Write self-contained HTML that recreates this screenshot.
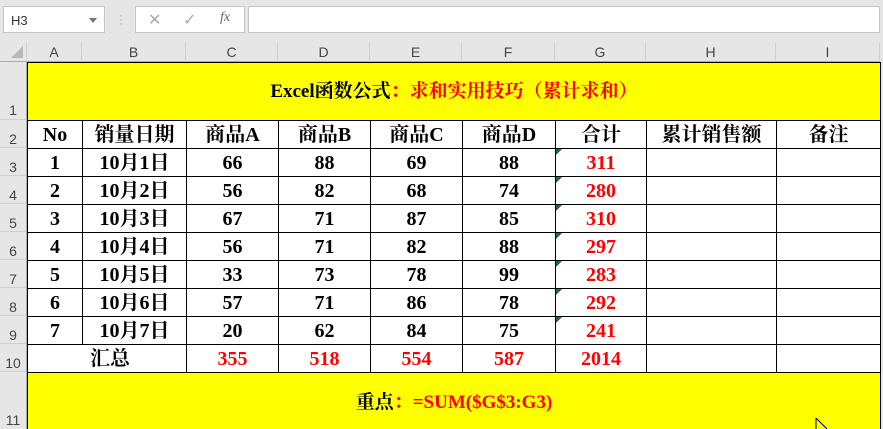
<!DOCTYPE html>
<html><head><meta charset="utf-8"><style>
*{margin:0;padding:0;box-sizing:border-box}
html,body{width:883px;height:429px;overflow:hidden}
body{background:#e6e6e6;font-family:"Liberation Serif","Noto Serif CJK SC",serif;position:relative}
.tb{position:absolute;left:0;top:0;width:883px;height:43px;background:#e6e6e6}
.box{position:absolute;background:#fff;border:1px solid #c6c6c6}
.hdr{position:absolute;top:43px;height:19px;background:#e6e6e6;border-bottom:1px solid #ababab;font:14px "Liberation Sans",sans-serif;color:#444;text-align:center;line-height:19px;border-right:1px solid #d0d0d0}
.rh{position:absolute;left:0;width:27px;background:#e6e6e6;border-right:1px solid #ababab;font:14px "Liberation Sans",sans-serif;color:#444;text-align:center;border-bottom:1px solid #d0d0d0}
table{position:absolute;left:27px;top:62px;border-collapse:collapse;table-layout:fixed;background:#fff}
td{border:1.5px solid #000;text-align:center;font-weight:bold;font-size:20px;height:28px;padding:0;line-height:26px;white-space:nowrap;overflow:hidden}
.r{color:#f00}
.y{background:#ff0}
.tri{position:relative}
.tri:before{content:"";position:absolute;left:0;top:0;border-top:6px solid #1e6b2e;border-right:6px solid transparent}
</style></head><body>
<div class="tb">
<div class="box" style="left:3px;top:6px;width:102px;height:27px;font:13px 'Liberation Sans',sans-serif;color:#333;padding:6px 7px">H3<span style="position:absolute;right:7px;top:11px;border-top:5px solid #777;border-left:4px solid transparent;border-right:4px solid transparent"></span></div>
<div style="position:absolute;left:119px;top:13px;color:#aaa;font:12px sans-serif;line-height:4px">·<br>·<br>·</div>
<div class="box" style="left:135px;top:6px;width:110px;height:27px;color:#aaa;font:16px 'Liberation Sans',sans-serif">
<span style="position:absolute;left:12px;top:3px">✕</span><span style="position:absolute;left:47px;top:3px">✓</span><span style="position:absolute;left:84px;top:3px;font:italic 14px 'Liberation Serif',serif;color:#666">fx</span></div>
<div class="box" style="left:248px;top:6px;width:632px;height:27px"></div>
</div>
<div class="hdr" style="left:0;width:27px"><span style="position:absolute;right:3px;bottom:3px;border-bottom:12px solid #b8b8b8;border-left:12px solid transparent"></span></div>
<div class="hdr" style="left:27px;width:55px">A</div>
<div class="hdr" style="left:82px;width:104px">B</div>
<div class="hdr" style="left:186px;width:92px">C</div>
<div class="hdr" style="left:278px;width:92px">D</div>
<div class="hdr" style="left:370px;width:92px">E</div>
<div class="hdr" style="left:462px;width:93px">F</div>
<div class="hdr" style="left:555px;width:91px">G</div>
<div class="hdr" style="left:646px;width:130px">H</div>
<div class="hdr" style="left:776px;width:104px">I</div>
<div class="rh" style="top:62px;height:58px;line-height:96px">1</div>
<div class="rh" style="top:120px;height:28px;line-height:38px">2</div>
<div class="rh" style="top:148px;height:28px;line-height:38px">3</div>
<div class="rh" style="top:176px;height:28px;line-height:38px">4</div>
<div class="rh" style="top:204px;height:28px;line-height:38px">5</div>
<div class="rh" style="top:232px;height:28px;line-height:38px">6</div>
<div class="rh" style="top:260px;height:28px;line-height:38px">7</div>
<div class="rh" style="top:288px;height:28px;line-height:38px">8</div>
<div class="rh" style="top:316px;height:28px;line-height:38px">9</div>
<div class="rh" style="top:344px;height:28px;line-height:38px">10</div>
<div class="rh" style="top:372px;height:70px;line-height:96px">11</div>
<table>
<colgroup><col style="width:55px"><col style="width:104px"><col style="width:92px"><col style="width:92px"><col style="width:92px"><col style="width:93px"><col style="width:91px"><col style="width:130px"><col style="width:104px"></colgroup>
<tr><td colspan="9" class="y" style="height:58px;font-size:19px">Excel函数公式<span class="r">：求和实用技巧（累计求和）</span></td></tr>
<tr><td>No</td><td>销量日期</td><td>商品A</td><td>商品B</td><td>商品C</td><td>商品D</td><td>合计</td><td>累计销售额</td><td>备注</td></tr>
<tr><td>1</td><td>10月1日</td><td>66</td><td>88</td><td>69</td><td>88</td><td class="r tri">311</td><td></td><td></td></tr>
<tr><td>2</td><td>10月2日</td><td>56</td><td>82</td><td>68</td><td>74</td><td class="r tri">280</td><td></td><td></td></tr>
<tr><td>3</td><td>10月3日</td><td>67</td><td>71</td><td>87</td><td>85</td><td class="r tri">310</td><td></td><td></td></tr>
<tr><td>4</td><td>10月4日</td><td>56</td><td>71</td><td>82</td><td>88</td><td class="r tri">297</td><td></td><td></td></tr>
<tr><td>5</td><td>10月5日</td><td>33</td><td>73</td><td>78</td><td>99</td><td class="r tri">283</td><td></td><td></td></tr>
<tr><td>6</td><td>10月6日</td><td>57</td><td>71</td><td>86</td><td>78</td><td class="r tri">292</td><td></td><td></td></tr>
<tr><td>7</td><td>10月7日</td><td>20</td><td>62</td><td>84</td><td>75</td><td class="r tri">241</td><td></td><td></td></tr>
<tr><td colspan="2" style="text-align:left;padding-left:62px">汇总</td><td class="r">355</td><td class="r">518</td><td class="r">554</td><td class="r">587</td><td class="r">2014</td><td></td><td></td></tr>
<tr><td colspan="9" class="y" style="height:70px;vertical-align:top;line-height:60px;font-size:19px">重点<span class="r">：=SUM($G$3:G3)</span></td></tr>
</table>
<svg style="position:absolute;left:815px;top:418px" width="14" height="12"><path d="M1 0 L1 12 M1 0 L12 11" stroke="#000" fill="#fff" stroke-width="1"/></svg>
</body></html>
